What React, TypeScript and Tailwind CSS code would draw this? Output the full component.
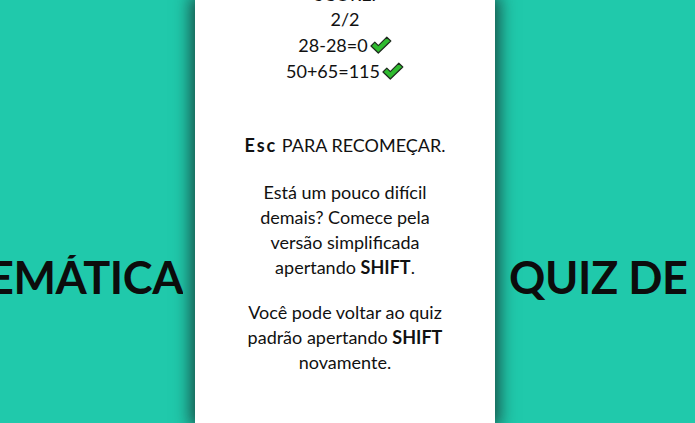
import React from "react";

function Check() {
  return (
    <svg
      className="inline-block ml-[2px] align-[-2px]"
      width="22"
      height="18"
      viewBox="0 0 22 18"
      xmlns="http://www.w3.org/2000/svg"
    >
      <path
        d="M1 10 L4.8 6.2 L8.3 9.7 L16.8 1.2 L20.8 5 L8.3 17 Z"
        fill="#2fbb2f"
        stroke="#1e2a1e"
        strokeWidth={1.2}
        strokeLinejoin="round"
      />
    </svg>
  );
}

export default function App() {
  return (
    <div className="relative h-[423px] w-full overflow-hidden bg-[#20c9ab] font-['Lato',sans-serif] text-[#111]">
      {/* marquee title behind the card */}
      <div className="absolute left-0 right-0 top-[255px] flex text-[45px] font-bold leading-none tracking-[-0.4px] whitespace-nowrap text-[#0c0c0c]">
        <div className="flex w-[183px] shrink-0 justify-end overflow-hidden">
          <span>QUIZ DE MATEMÁTICA</span>
        </div>
        <span className="ml-[326px]">QUIZ DE</span>
        <span className="ml-[24px]">MATEMÁTICA</span>
      </div>

      <div className="relative z-10 flex h-full justify-center pr-[5px]">
        <div className="h-full w-[300px] bg-white shadow-[0_0_16px_4px_rgba(20,30,30,0.75)]">
          <div className="-mt-[17px] text-center text-[18px]">
            <div className="leading-[26px]">
              <p className="leading-[23px]">SCORE:</p>
              <p>2/2</p>
              <p>
                28-28=0
                <Check />
              </p>
              <p>
                50+65=115
                <Check />
              </p>
            </div>

            <p className="mt-[49px] leading-[25px]">
              <span className="font-bold tracking-[2px]">Esc</span> PARA RECOMEÇAR.
            </p>

            <p className="mx-auto mt-[22px] w-[200px] leading-[25px]">
              Está um pouco difícil demais? Comece pela versão simplificada apertando{" "}
              <b>SHIFT</b>.
            </p>

            <p className="mx-auto mt-[20px] w-[210px] leading-[25px]">
              Você pode voltar ao quiz padrão apertando <b>SHIFT</b> novamente.
            </p>
          </div>
        </div>
      </div>
    </div>
  );
}
